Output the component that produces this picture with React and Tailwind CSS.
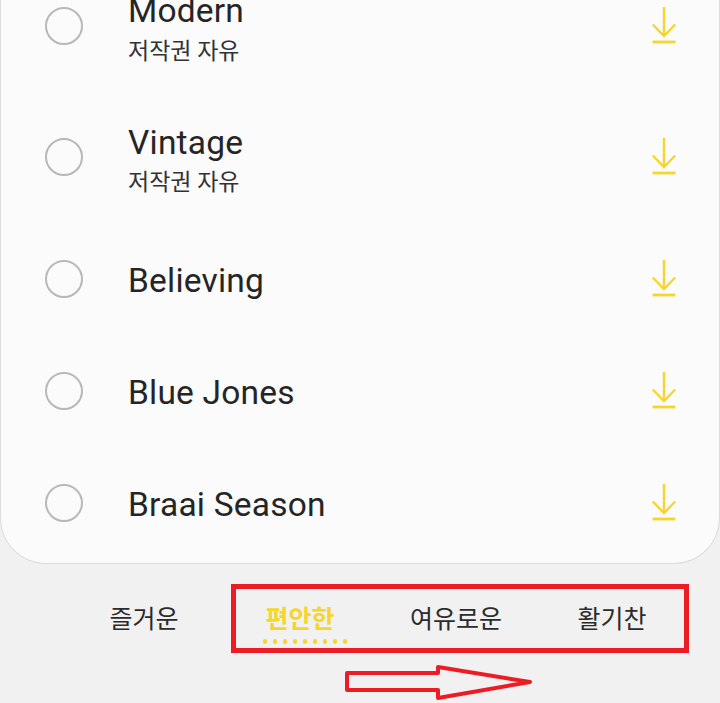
import React from 'react';

const SONGS = [
    { name: 'Modern', free: true },
    { name: 'Vintage', free: true },
    { name: 'Believing' },
    { name: 'Blue Jones' },
    { name: 'Braai Season' }
];

const TABS = ['즐거운', '편안한', '여유로운', '활기찬'];

const DownloadIcon = () => (
    <svg width="26" height="38" viewBox="0 0 26 38" fill="none" stroke="#f6d52c" strokeWidth="2.4">
        <path d="M13 0V29" />
        <path d="M1.8 17.5L13 29L24.2 17.5" />
        <path d="M1.5 35H24.5" strokeWidth="2.8" />
    </svg>
);

const SongRow = ({ name, free }) => (
    <div className={`flex items-center pl-[44px] pr-[42px] ${free ? 'h-[131.5px]' : 'h-[112px]'}`}>
        <div className="w-[38px] h-[38px] rounded-full border-2 border-[#b8b8b8] shrink-0" />
        <div className={`ml-[45px] flex-1 min-w-0 ${free ? 'pt-[7.5px]' : 'pt-[4px]'}`}>
            <div className="text-[33.5px] leading-[38px] text-[#252525] tracking-[0.2px]">{name}</div>
            {free && <div className="text-[23px] leading-[30px] text-[#333333] mt-[6.5px]">저작권 자유</div>}
        </div>
        <DownloadIcon />
    </div>
);

export default function App() {
    return (
        <div className="relative w-[720px] h-[703px] overflow-hidden bg-[#f1f1f1] font-['Roboto','Noto_Sans_CJK_KR',sans-serif]">
            <div className="-mt-[40px] h-[604px] bg-[#fbfbfb] border border-t-0 border-[#dcdcdc] rounded-b-[46px]">
                {SONGS.map(song => <SongRow key={song.name} {...song} />)}
            </div>

            <div className="grid grid-cols-4 w-[624px] ml-[66px] mt-[38px]">
                {TABS.map(tab => {
                    const active = tab === '편안한';
                    return (
                        <div key={tab} className="flex flex-col items-center">
                            <div className={`text-[25px] leading-[36px] ${active ? 'font-bold text-[#f6d52c]' : 'text-[#2b2b2b]'}`}>{tab}</div>
                            {active && (
                                <div className="flex gap-[5.5px] mt-[1px] ml-[10px]">
                                    {Array.from({ length: 9 }).map((_, i) => (
                                        <span key={i} className="w-[4.5px] h-[4.5px] rounded-full bg-[#f6d52c]" />
                                    ))}
                                </div>
                            )}
                        </div>
                    );
                })}
            </div>

            {/* red annotation marks over the screenshot */}
            <div className="absolute left-[231px] top-[584px] w-[458px] h-[69px] border-[5px] border-[#ed1c24]" />
            <svg className="absolute left-[340px] top-[660px]" width="196" height="43" viewBox="0 0 196 43" fill="none">
                <path d="M7 13H98V7L190 22L98 38V30H7Z" stroke="#ed1c24" strokeWidth="4" strokeLinejoin="round" />
            </svg>
        </div>
    );
}
